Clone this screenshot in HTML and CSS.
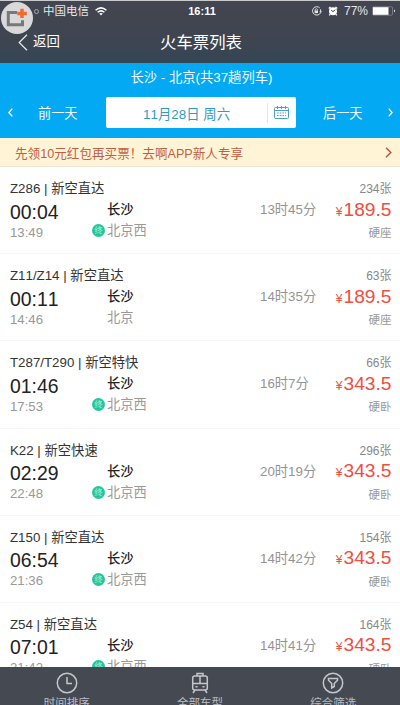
FILE: index.html
```html
<!DOCTYPE html>
<html lang="zh-CN">
<head>
<meta charset="utf-8">
<title>火车票列表</title>
<link rel="stylesheet" href="styles.css">
</head>
<body>
<div class="app">
  <header class="top">
    <div class="status">
      <div class="carrier"><i class="signal"></i><span>中国电信</span>
        <svg width="12" height="9" viewBox="0 0 12 9" fill="none" stroke="#fff" stroke-width="1.5"><path d="M.6 3.2Q6-1.4 11.4 3.2M2.6 5.3Q6 2.4 9.4 5.3"/><path d="M4.2 6.6Q6 5.2 7.8 6.6L6 8.6Z" fill="#fff" stroke="none"/></svg>
      </div>
      <div class="clock">16:11</div>
      <div class="power">
        <svg width="12" height="10" viewBox="0 0 12 10" fill="none" stroke="#e4e5e8"><path d="M8.7 1.9A4.2 4.2 0 1 0 9.4 7M9.6 3.3V6"/><path d="M8.2 5.4h3L9.7 7z" fill="#e4e5e8" stroke="none"/><rect x="3.6" y="4.5" width="3.4" height="2.6" fill="#e4e5e8" stroke="none"/><path d="M4.2 4.6V3.3q1.1-1.2 2.2 0v1.3" stroke-width=".8"/></svg>
        <svg class="alarm" width="10" height="10" viewBox="0 0 10 10"><circle cx="5" cy="5.3" r="4" fill="#fff"/><path d="M.8 2.5 2.6.9M7.4.9l1.8 1.6M2.2 8.2 1.3 9.4M7.8 8.2l.9 1.2" stroke="#fff" stroke-width="1.3"/><path d="M3.2 4.2 5 5.6l2.2-1.8" fill="none" stroke="#434651"/></svg>
        <span>77%</span>
        <svg width="24" height="10" viewBox="0 0 24 10"><rect x=".5" y=".8" width="20" height="8.4" rx="1" fill="none" stroke="#8d9099" stroke-width=".7"/><path d="M1 1.2h15.5v7.6H1z" fill="#fff"/><path d="M22 3.6q2 1.4 0 2.8z" fill="#fff"/></svg>
      </div>
    </div>
    <div class="nav">
      <div class="back"><svg width="10" height="17" viewBox="0 0 10 17" fill="none" stroke="#e8eaed" stroke-width="1.2"><path d="M9 .8 1.2 8.5 9 16.2"/></svg><span>返回</span></div>
      <h1>火车票列表</h1>
    </div>
    <div class="recorder"><svg width="22" height="20" viewBox="0 0 22 20" fill="none"><path d="M11 4.5H2.3v12.2h14.2v-4.4" stroke="#77787a" stroke-width="3"/><path d="M16 .7v9.4M11.2 5.4h9.6" stroke="#f26a2c" stroke-width="3.5"/></svg></div>
  </header>

  <section class="dates">
    <div class="route">长沙 - 北京(共37趟列车)</div>
    <div class="picker">
      <svg width="5" height="9" viewBox="0 0 5 9" fill="none" stroke="#fff" stroke-width="1.4"><path d="M4.3.6.9 4.5l3.4 3.9"/></svg>
      <span class="prev">前一天</span>
      <div class="field"><span>11月28日 周六</span><i></i>
        <svg width="15" height="13" viewBox="0 0 15 13" fill="none" stroke="#4b9fcb"><rect x=".5" y="1.5" width="14" height="11" rx="1"/><path d="M1 4.5h13M3.5 0v3M7.5 0v3M11.5 0v3" /><path d="M3 7h9M3 9.5h9" stroke-dasharray="1.7 1"/></svg>
      </div>
      <span class="next">后一天</span>
      <svg width="5" height="9" viewBox="0 0 5 9" fill="none" stroke="#fff" stroke-width="1.2"><path d="m.7.6 3.4 3.9L.7 8.4"/></svg>
    </div>
  </section>

  <div class="promo"><span>先领10元红包再买票！去啊APP新人专享</span>
    <svg width="7" height="11" viewBox="0 0 7 11" fill="none" stroke="#bd5740" stroke-width="1.5"><path d="m1 .7 4.8 4.8L1 10.3"/></svg>
  </div>

  <main class="list">
    <article class="train"><div class="name">Z286 | 新空直达</div><div class="left">234张</div><div class="dep">00:04</div><div class="from">长沙</div><div class="dur">13时45分</div><div class="price"><small>¥</small>189.5</div><div class="arr">13:49</div><div class="to"><b>终</b>北京西</div><div class="seat">硬座</div></article>
    <article class="train"><div class="name">Z11/Z14 | 新空直达</div><div class="left">63张</div><div class="dep">00:11</div><div class="from">长沙</div><div class="dur">14时35分</div><div class="price"><small>¥</small>189.5</div><div class="arr">14:46</div><div class="to">北京</div><div class="seat">硬座</div></article>
    <article class="train"><div class="name">T287/T290 | 新空特快</div><div class="left">66张</div><div class="dep">01:46</div><div class="from">长沙</div><div class="dur">16时7分</div><div class="price"><small>¥</small>343.5</div><div class="arr">17:53</div><div class="to"><b>终</b>北京西</div><div class="seat">硬卧</div></article>
    <article class="train"><div class="name">K22 | 新空快速</div><div class="left">296张</div><div class="dep">02:29</div><div class="from">长沙</div><div class="dur">20时19分</div><div class="price"><small>¥</small>343.5</div><div class="arr">22:48</div><div class="to"><b>终</b>北京西</div><div class="seat">硬卧</div></article>
    <article class="train"><div class="name">Z150 | 新空直达</div><div class="left">154张</div><div class="dep">06:54</div><div class="from">长沙</div><div class="dur">14时42分</div><div class="price"><small>¥</small>343.5</div><div class="arr">21:36</div><div class="to"><b>终</b>北京西</div><div class="seat">硬卧</div></article>
    <article class="train"><div class="name">Z54 | 新空直达</div><div class="left">164张</div><div class="dep">07:01</div><div class="from">长沙</div><div class="dur">14时41分</div><div class="price"><small>¥</small>343.5</div><div class="arr">21:42</div><div class="to"><b>终</b>北京西</div><div class="seat">硬卧</div></article>
  </main>

  <footer class="tabs">
    <div class="tab"><svg width="22" height="22" viewBox="0 0 22 22" fill="none" stroke="#c3c6cc" stroke-width="1.5"><circle cx="11" cy="11" r="9.7"/><path d="M11 5v6.5h5"/></svg><span>时间排序</span></div>
    <div class="tab"><svg width="22" height="22" viewBox="0 0 22 22" fill="none" stroke="#c3c6cc" stroke-width="1.5"><rect x="3.7" y="4" width="14.6" height="14" rx="2"/><path d="M8 4V1.5h6V4M4 11.5h14M11 4v7.5M6 18l-2 3M16 18l2 3"/><path d="M6.5 14.8h2M13.5 14.8h2"/></svg><span>全部车型</span></div>
    <div class="tab"><svg width="22" height="22" viewBox="0 0 22 22" fill="none" stroke="#c3c6cc" stroke-width="1.5"><circle cx="11" cy="11" r="9.7"/><path d="M6.5 6.5h9v1.7l-3.2 3.3v3L9.7 16v-4.5L6.5 8.2z"/></svg><span>综合筛选</span></div>
  </footer>
</div>
</body>
</html>
```
FILE: styles.css
```css
* { box-sizing: border-box; }
body { margin: 0; font-family: "Liberation Sans", "Noto Sans CJK SC", sans-serif; }
svg { display: block; flex: none; }
.app { width: 400px; height: 705px; overflow: hidden; display: flex; flex-direction: column; background: #fff; white-space: nowrap; }

.top { position: relative; height: 63px; flex: none; border-top: 1px solid #c9cacd; background: linear-gradient(#444550, #3d4551 70%, #334654); color: #fff; }
.status { height: 20px; display: grid; grid-template-columns: 1fr auto 1fr; align-items: center; padding: 0 4px 0 34px; font-size: 11px; line-height: 20px; }
.carrier { display: flex; align-items: center; color: #e6e7ea; font-size: 11.5px; }
.carrier span { margin-right: 6px; }
.signal { width: 5px; height: 5px; border: 1px solid #a5a7ad; border-radius: 50%; margin-right: 4px; }
.clock { font-weight: bold; font-size: 11px; margin-left: -26px; }
.power { display: flex; align-items: center; justify-content: flex-end; }
.power .alarm { margin: 0 6px 0 5px; }
.power span { font-size: 12px; margin-right: 4px; color: #e6e7ea; }
.nav { display: grid; grid-template-columns: 100px 1fr 100px; align-items: center; height: 42px; }
.back { display: flex; align-items: center; gap: 5px; padding-left: 18px; font-size: 13.4px; line-height: 20px; }
.nav h1 { margin: 0 0 0 2px; text-align: center; font-size: 16.4px; font-weight: 400; line-height: 24px; }
.recorder { position: absolute; left: 1px; top: 1px; width: 32px; height: 32px; border-radius: 50%; background: #d9d9d9; display: flex; align-items: center; justify-content: center; }

.dates { height: 75px; flex: none; background: #03a9f2; color: #f1fbff; }
.route { text-align: center; height: 34px; line-height: 29px; font-size: 13.3px; padding-left: 3px; }
.picker { display: flex; align-items: center; height: 31px; padding: 0 7px 0 8px; font-size: 13.2px; }
.prev { margin-left: 25px; width: 68px; }
.field { width: 190px; height: 31px; background: #fff; border-radius: 2px; display: flex; align-items: center; color: #3298c6; }
.field span { width: 161px; padding-left: 37px; font-size: 13.4px; font-kerning: none; }
.field i { width: 1px; height: 20px; background: #dde5eb; margin-right: 6px; }
.next { margin-left: 27px; margin-right: auto; }

.promo { height: 29px; flex: none; border-bottom: 1px solid #eee6d2; background: #fff4d6; color: #c35e45; display: flex; align-items: center; justify-content: space-between; padding: 1px 8px 0 15px; font-size: 12.6px; }

.list { flex: none; height: 500px; overflow: hidden; }
.train { height: 87.2px; padding: 12px 8.5px 0 10px; border-bottom: 1px solid #f7f7f7; display: grid; grid-template-columns: 97px 153px 56.5px 1fr; grid-template-rows: 20px 22px 20px; align-items: center; line-height: 20px; color: #888; font-size: 13.3px; font-kerning: none; }
.name { grid-column: 1 / 4; color: #333; }
.left { justify-self: end; font-size: 12px; }
.dep { font-size: 19.4px; color: #222; padding-top: 3px; }
.from { font-weight: 500; color: #222; }
.dur { color: #949494; }
.price { justify-self: end; font-size: 19.2px; color: #f04e40; padding-top: 1px; }
.price small { font-size: 12px; margin-right: 1px; }
.arr { font-size: 13.2px; color: #999; padding-top: 3px; }
.to { position: relative; grid-column: 2 / 4; color: #999; }
.to b { position: absolute; left: -15px; top: 3px; width: 13px; height: 13px; border-radius: 50%; background: #27c59a; color: #b9f2df; font-size: 8px; font-weight: 400; line-height: 13px; text-align: center; }
.seat { justify-self: end; font-size: 11.5px; color: #999; padding-top: 4px; }

.tabs { height: 38px; flex: none; overflow: hidden; background: #454951; color: #b9bcc3; display: grid; grid-template-columns: repeat(3, 1fr); font-size: 11.5px; line-height: 14px; }
.tab { display: flex; flex-direction: column; align-items: center; padding-top: 5px; gap: 2px; }
```
